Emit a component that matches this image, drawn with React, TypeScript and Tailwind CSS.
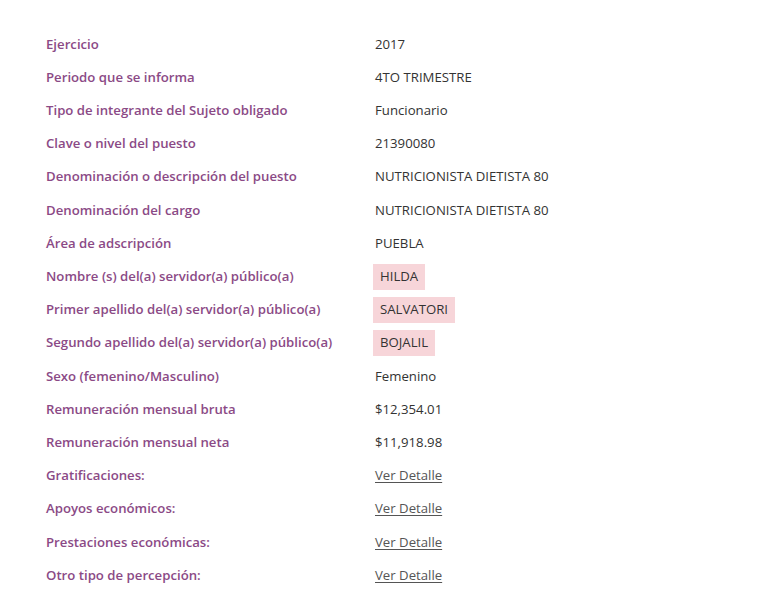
const rows: { label: string; value: string; kind?: "mark" | "link" }[] = [
  { label: "Ejercicio", value: "2017" },
  { label: "Periodo que se informa", value: "4TO TRIMESTRE" },
  { label: "Tipo de integrante del Sujeto obligado", value: "Funcionario" },
  { label: "Clave o nivel del puesto", value: "21390080" },
  { label: "Denominación o descripción del puesto", value: "NUTRICIONISTA DIETISTA 80" },
  { label: "Denominación del cargo", value: "NUTRICIONISTA DIETISTA 80" },
  { label: "Área de adscripción", value: "PUEBLA" },
  { label: "Nombre (s) del(a) servidor(a) público(a)", value: "HILDA", kind: "mark" },
  { label: "Primer apellido del(a) servidor(a) público(a)", value: "SALVATORI", kind: "mark" },
  { label: "Segundo apellido del(a) servidor(a) público(a)", value: "BOJALIL", kind: "mark" },
  { label: "Sexo (femenino/Masculino)", value: "Femenino" },
  { label: "Remuneración mensual bruta", value: "$12,354.01" },
  { label: "Remuneración mensual neta", value: "$11,918.98" },
  { label: "Gratificaciones:", value: "Ver Detalle", kind: "link" },
  { label: "Apoyos económicos:", value: "Ver Detalle", kind: "link" },
  { label: "Prestaciones económicas:", value: "Ver Detalle", kind: "link" },
  { label: "Otro tipo de percepción:", value: "Ver Detalle", kind: "link" },
];

export default function App() {
  return (
    <div className="min-h-[600px] w-[774px] bg-white pl-[46px] pt-[28px] font-['Open_Sans',sans-serif] text-[13.2px]">
      {rows.map((r) => (
        <div key={r.label} className="flex h-[33.2px] items-center">
          <div className="w-[329px] font-semibold text-[#8b4a86]">{r.label}</div>
          {r.kind === "mark" ? (
            <span className="-ml-[2px] flex h-[26px] items-center bg-[#f7d5d9] px-[7px] text-[#333]">{r.value}</span>
          ) : r.kind === "link" ? (
            <a href="#" className="text-[#555] underline underline-offset-2">{r.value}</a>
          ) : (
            <span className="text-[#333]">{r.value}</span>
          )}
        </div>
      ))}
    </div>
  );
}
